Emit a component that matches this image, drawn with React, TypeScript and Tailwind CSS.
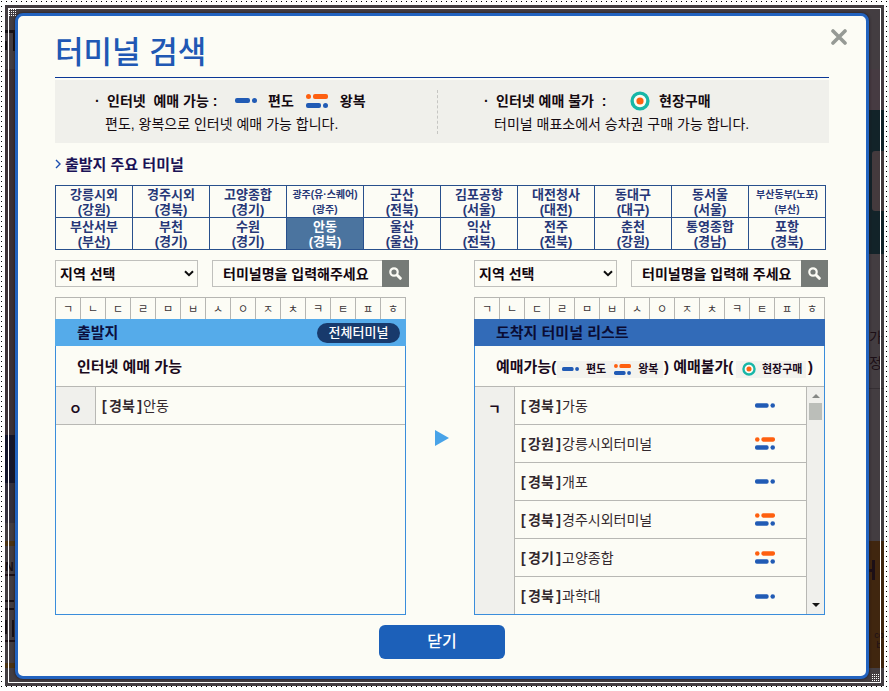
import React from "react";
import clsx from "clsx";

type Terminal = { name: string; region: string; small?: boolean; active?: boolean };
type Fare = "oneway" | "round";

const MAIN_TERMINALS: Terminal[][] = [
  [
    { name: "강릉시외", region: "강원" },
    { name: "경주시외", region: "경북" },
    { name: "고양종합", region: "경기" },
    { name: "광주(유·스퀘어)", region: "광주", small: true },
    { name: "군산", region: "전북" },
    { name: "김포공항", region: "서울" },
    { name: "대전청사", region: "대전" },
    { name: "동대구", region: "대구" },
    { name: "동서울", region: "서울" },
    { name: "부산동부(노포)", region: "부산", small: true },
  ],
  [
    { name: "부산서부", region: "부산" },
    { name: "부천", region: "경기" },
    { name: "수원", region: "경기" },
    { name: "안동", region: "경북", active: true },
    { name: "울산", region: "울산" },
    { name: "익산", region: "전북" },
    { name: "전주", region: "전북" },
    { name: "춘천", region: "강원" },
    { name: "통영종합", region: "경남" },
    { name: "포항", region: "경북" },
  ],
];

const INITIALS = ["ㄱ", "ㄴ", "ㄷ", "ㄹ", "ㅁ", "ㅂ", "ㅅ", "ㅇ", "ㅈ", "ㅊ", "ㅋ", "ㅌ", "ㅍ", "ㅎ"];

const ARRIVALS: { region: string; name: string; fare: Fare }[] = [
  { region: "경북", name: "가동", fare: "oneway" },
  { region: "강원", name: "강릉시외터미널", fare: "round" },
  { region: "경북", name: "개포", fare: "oneway" },
  { region: "경북", name: "경주시외터미널", fare: "round" },
  { region: "경기", name: "고양종합", fare: "round" },
  { region: "경북", name: "과학대", fare: "oneway" },
];

function OneWayIcon({ className }: { className?: string }) {
  return (
    <svg viewBox="0 0 22 5" className={clsx("shrink-0", className)} aria-label="편도" role="img">
      <rect x="0" y="0" width="15" height="5" rx="2" fill="#215bb5" />
      <circle cx="19.5" cy="2.5" r="2.5" fill="#215bb5" />
    </svg>
  );
}

function RoundIcon({ className }: { className?: string }) {
  return (
    <svg viewBox="0 0 22 14" className={clsx("shrink-0", className)} aria-label="왕복" role="img">
      <circle cx="2.5" cy="2.5" r="2.5" fill="#fe6010" />
      <rect x="7" y="0" width="15" height="5" rx="2" fill="#fe6010" />
      <rect x="0" y="9" width="15" height="5" rx="2" fill="#215bb5" />
      <circle cx="19.5" cy="11.5" r="2.5" fill="#215bb5" />
    </svg>
  );
}

function OnsiteIcon({ className }: { className?: string }) {
  return (
    <svg viewBox="0 0 20 20" className={clsx("shrink-0", className)} aria-label="현장구매" role="img">
      <circle cx="10" cy="10" r="7.9" fill="#fcfcf5" stroke="#18b7a8" strokeWidth="3.4" />
      <circle cx="10" cy="10" r="3.6" fill="#fe6010" />
    </svg>
  );
}

function SearchRow({ id, placeholder }: { id: string; placeholder: string }) {
  return (
    <div className="flex h-[27px] gap-[14px]">
      <div className="relative w-[143px] shrink-0">
        <select
          id={`${id}-region`}
          aria-label="지역 선택"
          className="h-full w-full appearance-none border border-[#c0c0bc] bg-transparent pl-1 text-[14px] leading-[20px] font-bold text-[#12060f]"
        >
          <option>지역 선택</option>
        </select>
        <svg viewBox="0 0 10 7" className="pointer-events-none absolute top-[10px] right-[4px] h-[7px] w-[10px]" aria-hidden="true">
          <path d="M1 1.2 5 5.2 9 1.2" fill="none" stroke="#0c0c0c" strokeWidth="2" />
        </svg>
      </div>
      <div className="flex min-w-0 flex-1">
        <input
          type="text"
          aria-label="터미널명"
          placeholder={placeholder}
          className="h-full min-w-0 flex-1 border border-r-0 border-[#c0c0bc] bg-transparent pl-[10px] text-[14px] leading-[20px] font-bold text-[#12060f] placeholder:text-[#12060f] placeholder:opacity-100"
        />
        <button type="button" aria-label="검색" className="flex w-[27px] items-center justify-center bg-[#767b77]">
          <svg viewBox="0 0 13 13" className="h-[13px] w-[13px]" aria-hidden="true">
            <circle cx="5" cy="5" r="3.7" fill="none" stroke="#fbfbf4" strokeWidth="2.2" />
            <path d="M8.3 8.3 11.3 11.3" stroke="#fbfbf4" strokeWidth="3" strokeLinecap="round" />
          </svg>
        </button>
      </div>
    </div>
  );
}

function InitialBar() {
  return (
    <div className="mt-[10px] mr-[3px] flex h-[22px] border-t border-l border-[#b6b6b2]">
      {INITIALS.map((c) => (
        <button key={c} type="button" className="flex-1 border-r border-[#b6b6b2] text-[11px] leading-[20px] text-[#3a3436]">
          {c}
        </button>
      ))}
    </div>
  );
}

function TerminalName({ region, name }: { region: string; name: string }) {
  return (
    <span className="flex text-[14px] leading-[20px] text-[#33282e]">
      <span className="flex w-[41px] justify-between pr-px font-bold">
        <span>[</span>
        <span>{region}</span>
        <span>]</span>
      </span>
      <span>{name}</span>
    </span>
  );
}

/* Dimmed page that shows around the dialog */
function Backdrop() {
  return (
    <div aria-hidden="true" className="absolute inset-0 overflow-hidden bg-[#433d41]">
      <div className="absolute top-[64px] left-0 h-[366px] w-[10px] bg-[#3c3136]" />
      <div className="absolute top-[25px] left-0 h-[3px] w-[9px] bg-[#141014]" />
      <div className="absolute top-[25px] left-[8px] h-[21px] w-[2px] bg-[#141014]" />
      <div className="absolute top-[36px] left-0 h-[9px] w-[2px] bg-[#141014]" />
      <div className="absolute top-[430px] left-0 h-[48px] w-[10px] bg-[#14152a]" />
      <div className="absolute top-[478px] left-0 h-[40px] w-[10px] bg-[#34303c]" />
      <div className="absolute top-[536px] left-0 h-[5px] w-[10px] bg-[#4b3312]" />
      <div className="absolute top-[658px] left-0 h-[5px] w-[10px] bg-[#4b3312]" />
      <div className="absolute top-[555px] left-0 text-[12px] leading-[14px] font-bold text-[#171015]">N</div>
      <div className="absolute top-[569px] left-0 h-[2px] w-[10px] bg-[#1c1016]" />
      <div className="absolute top-[595px] left-0 h-[10px] w-[9px] border-y-2 border-[#171015]" />
      <div className="absolute top-[615px] left-0 h-[14px] w-[2px] bg-[#171015]" />
      <div className="absolute top-[615px] left-[7px] h-[17px] w-[2px] bg-[#171015]" />
      <div className="absolute top-[635px] left-0 h-[2px] w-[10px] bg-[#1c1016]" />

      <div className="absolute top-[64px] right-0 h-[41px] w-[16px] bg-[#463b42]" />
      <div className="absolute top-[105px] right-0 h-[144px] w-[16px] bg-[#122329]" />
      <div className="absolute top-[146px] right-0 h-[60px] w-[12px] rounded-l-[3px] bg-[#443a3d]" />
      <div className="absolute top-[322px] right-0 w-[15px] text-[14px] leading-[20px] text-[#1c0f16]">가</div>
      <div className="absolute top-[348px] right-0 w-[15px] text-[14px] leading-[20px] text-[#1c0f16]">정</div>
      <div className="absolute top-[383px] right-0 h-px w-[16px] bg-[#352f33]" />
      <div className="absolute top-[536px] right-0 h-[127px] w-[16px] bg-[#40260f]" />
      <div className="absolute top-[555px] right-[9px] h-[20px] w-[3px] bg-[#1c0f16]" />
      <div className="absolute top-[564px] right-[12px] h-[3px] w-[4px] bg-[#1c0f16]" />
      <div className="absolute top-[625px] right-0 w-[10px] text-center text-[9px] leading-[10px] text-[#1c0f16]">
        co
        <br />b
      </div>
    </div>
  );
}

function GripDots({ className }: { className: string }) {
  return (
    <div
      aria-hidden="true"
      className={clsx(
        "absolute size-[8px] bg-[#433d41] bg-[conic-gradient(from_270deg_at_1px_1px,#fff_90deg,#433d41_90deg)] bg-[length:2px_2px]",
        className
      )}
    />
  );
}

export default function App() {
  return (
    <div className="bg-[conic-gradient(from_270deg_at_1px_1px,#000_90deg,#fff_90deg)] bg-[length:5px_5px] bg-[position:1px_1px] p-[5px] font-['Liberation_Sans','Noto_Sans_CJK_KR',sans-serif]">
      <div className="relative pt-[8px] pr-[15px] pb-[7px] pl-[10px]">
        <Backdrop />
        <div aria-hidden="true" className="pointer-events-none absolute inset-[3px] border border-white" />
        <GripDots className="top-[4px] left-[4px]" />
        <GripDots className="right-[4px] bottom-[4px]" />

        <main
          role="dialog"
          aria-labelledby="dialog-title"
          className="relative rounded-[8px] border-3 border-[#2263bf] bg-[#fcfcf5] px-[37px] pt-[16px] pb-[17px] shadow-[0_0_3px_#1d1418]"
        >
          <button type="button" aria-label="닫기" className="absolute top-[13px] right-[19px] size-[16px]">
            <svg viewBox="0 0 16 16" className="size-full" aria-hidden="true">
              <path d="M2 2 14 14M14 2 2 14" stroke="#969a95" strokeWidth="3.6" strokeLinecap="round" />
            </svg>
          </button>

          <h1 id="dialog-title" className="h-[45px] text-[31px] leading-[42px] font-medium text-[#2058b4]">
            터미널 검색
          </h1>

          <section className="border-t border-[#0b3796] pt-[2px]">
            <div className="flex h-[63px] items-center bg-[#f0f0eb] text-[#140a10]">
              <div className="flex h-[44px] w-[383px] flex-col justify-between border-r border-dashed border-[#c6c6c2] pl-[38px]">
                <div className="flex h-[22px] items-center text-[14px] leading-[22px] font-bold">
                  <span className="w-[14px] pl-[2px]">·</span>
                  <span className="w-[128px] whitespace-pre">인터넷  예매 가능 :</span>
                  <OneWayIcon className="h-[5px] w-[22px]" />
                  <span className="ml-[11px]">편도</span>
                  <RoundIcon className="ml-[12px] h-[14px] w-[22px]" />
                  <span className="ml-[12px]">왕복</span>
                </div>
                <p className="pl-[12px] text-[14px] leading-[20px]">편도, 왕복으로 인터넷 예매 가능 합니다.</p>
              </div>
              <div className="flex h-[44px] flex-1 flex-col justify-between pl-[44px]">
                <div className="flex h-[22px] items-center text-[14px] leading-[22px] font-bold">
                  <span className="w-[14px] pl-[2px]">·</span>
                  <span className="w-[134px] whitespace-pre">인터넷 예매 불가  :</span>
                  <OnsiteIcon className="size-[20px]" />
                  <span className="ml-[9px]">현장구매</span>
                </div>
                <p className="pl-[12px] text-[14px] leading-[20px]">터미널 매표소에서 승차권 구매 가능 합니다.</p>
              </div>
            </div>
          </section>

          <section className="mr-[3px] pt-[12px]">
            <h2 className="flex h-[20px] items-center gap-[4px] text-[15px] leading-[20px] font-bold text-[#1a1256]">
              <svg viewBox="0 0 6 10" className="mb-[3px] h-[10px] w-[6px]" aria-hidden="true">
                <path d="M1 1 5 5 1 9" fill="none" stroke="#1c4fb0" strokeWidth="1.4" />
              </svg>
              출발지 주요 터미널
            </h2>
            <table className="mt-[10px] w-full table-fixed border-collapse">
              <tbody>
                {MAIN_TERMINALS.map((row, i) => (
                  <tr key={i} className="h-[32px]">
                    {row.map((t) => (
                      <td
                        key={t.name}
                        className={clsx("border border-[#28508c] p-0", t.active ? "bg-[#4b749f] text-white" : "text-[#263777]")}
                      >
                        <button
                          type="button"
                          className={clsx(
                            "block h-[31px] w-full leading-[15px] font-bold whitespace-nowrap",
                            t.small ? "text-[10px]" : "text-[13px]"
                          )}
                        >
                          {t.name}
                          <br />({t.region})
                        </button>
                      </td>
                    ))}
                  </tr>
                ))}
              </tbody>
            </table>
          </section>

          <div className="mt-[10px] mr-px flex">
            <section className="min-w-0 flex-1">
              <SearchRow id="departure" placeholder="터미널명을 입력해주세요" />
              <InitialBar />
              <div className="mr-[3px] h-[296px] border border-[#3a8ddb]">
                <div className="-mx-px -mt-px flex h-[27px] items-center justify-between bg-[#55abea] pr-[6px] pl-[22px]">
                  <h3 className="text-[15px] leading-[20px] font-bold text-[#0c0f3e]">출발지</h3>
                  <button type="button" className="h-[20px] w-[83px] rounded-full bg-[#183a6c] text-[13px] leading-[20px] font-medium text-white">
                    전체터미널
                  </button>
                </div>
                <p className="h-[40px] pl-[21px] text-[15px] leading-[42px] font-bold text-[#1a0a1c]">인터넷 예매 가능</p>
                <div className="flex h-[39px] border-y border-[#b8b8b4]">
                  <span className="w-[40px] border-r border-[#b8b8b4] bg-[#f0f0ec] text-center text-[14px] leading-[44px] font-bold text-[#1a0a1c]">ㅇ</span>
                  <a href="#andong" className="flex flex-1 items-center pl-[6px]">
                    <TerminalName region="경북" name="안동" />
                  </a>
                </div>
              </div>
            </section>

            <div className="flex w-[65px] items-center justify-center py-[84px]">
              <svg viewBox="0 0 14 16" className="h-[16px] w-[14px]" aria-hidden="true">
                <path d="M0 0 14 8 0 16Z" fill="#48a3e8" />
              </svg>
            </div>

            <section className="min-w-0 flex-1">
              <SearchRow id="arrival" placeholder="터미널명을 입력해 주세요" />
              <InitialBar />
              <div className="mr-[3px] flex h-[296px] flex-col border border-[#3a8ddb]">
                <h3 className="-mx-px -mt-px h-[27px] shrink-0 bg-[#326bb8] pl-[22px] text-[15px] leading-[27px] font-bold text-[#0a0c34]">
                  도착지 터미널 리스트
                </h3>
                <div className="flex h-[40px] shrink-0 items-center pt-[2px] pl-[21px] text-[15px] leading-[20px] font-bold whitespace-nowrap text-[#1a0a1c]">
                  <span className="w-[61px]">예매가능(</span>
                  <span className="mt-[4px] flex h-[17px] w-[106px] items-center bg-[#f3f3ee] pl-[5px] text-[11px]">
                    <OneWayIcon className="h-[4px] w-[17px]" />
                    <span className="ml-[7px]">편도</span>
                    <RoundIcon className="ml-[8px] h-[11px] w-[17px]" />
                    <span className="ml-[7px]">왕복</span>
                  </span>
                  <span className="w-[73px] pl-px">) 예매불가(</span>
                  <span className="mt-[4px] flex h-[17px] w-[70px] items-center bg-[#f3f3ee] pl-[6px] text-[11px]">
                    <OnsiteIcon className="size-[14px]" />
                    <span className="ml-[6px]">현장구매</span>
                  </span>
                  <span className="pl-[2px]">)</span>
                </div>
                <div className="flex min-h-0 flex-1 border-t border-[#b8b8b4]">
                  <span className="w-[40px] border-r border-[#b8b8b4] bg-[#f0f0ec] text-center text-[14px] leading-[44px] font-bold text-[#1a0a1c]">ㄱ</span>
                  <ul className="flex-1 border-r border-[#b8b8b4]">
                    {ARRIVALS.map((a) => (
                      <li key={a.name} className="h-[38px] border-b border-[#b8b8b4] last:border-b-0">
                        <a href="#arrival" className="flex h-full items-center justify-between pr-[31px] pl-[6px]">
                          <TerminalName region={a.region} name={a.name} />
                          {a.fare === "oneway" ? <OneWayIcon className="h-[5px] w-[20px]" /> : <RoundIcon className="h-[13px] w-[20px]" />}
                        </a>
                      </li>
                    ))}
                  </ul>
                  <div className="flex w-[17px] flex-col items-center bg-[#f0f0ec] py-[7px]" aria-hidden="true">
                    <svg viewBox="0 0 8 4" className="h-[4px] w-[8px]">
                      <path d="M0 4 4 0 8 4Z" fill="#858885" />
                    </svg>
                    <div className="mt-[5px] h-[17px] w-[13px] bg-[#bbbeb9]" />
                    <svg viewBox="0 0 8 4" className="mt-auto h-[4px] w-[8px]">
                      <path d="M0 0 8 0 4 4Z" fill="#151515" />
                    </svg>
                  </div>
                </div>
              </div>
            </section>
          </div>

          <div className="mt-[10px] flex justify-center">
            <button type="button" className="h-[34px] w-[126px] rounded-[6px] bg-[#1c60b9] text-[16px] leading-[32px] font-medium text-white">
              닫기
            </button>
          </div>
        </main>
      </div>
    </div>
  );
}
